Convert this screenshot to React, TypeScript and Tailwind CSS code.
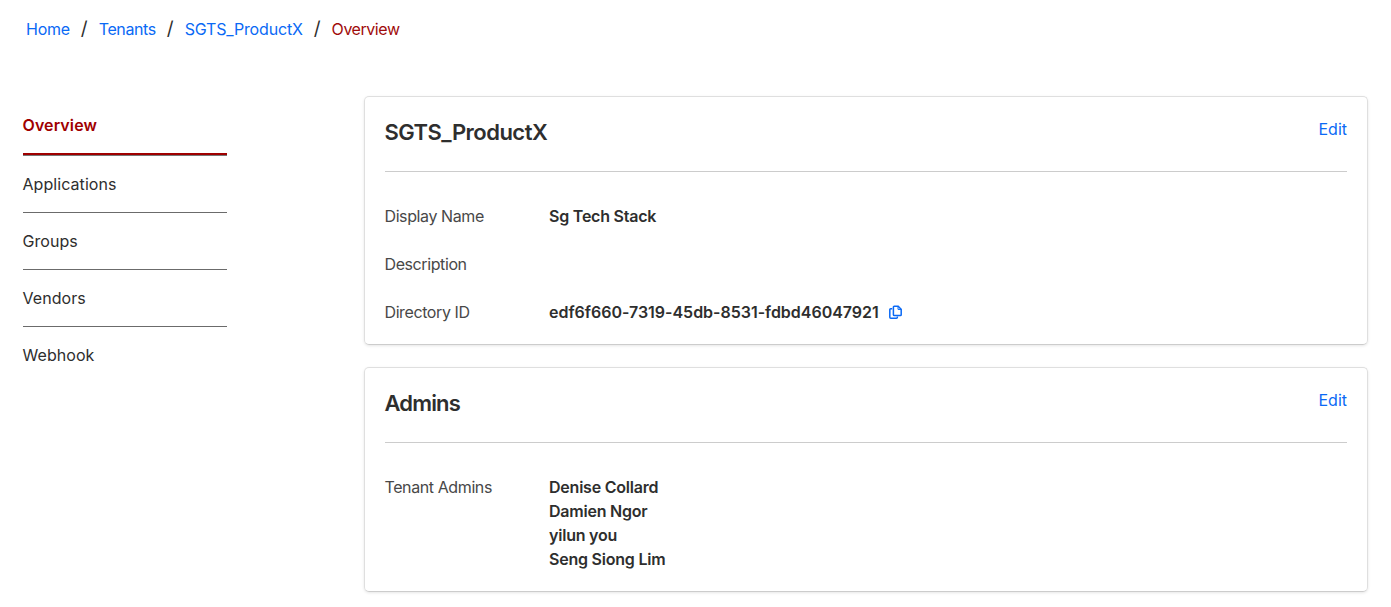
import type { ReactNode } from "react";

const crumbs = [
  { label: "Home", spacing: "tracking-[-0.25px]" },
  { label: "Tenants", spacing: "tracking-[-0.4px]" },
  { label: "SGTS_ProductX", spacing: "tracking-[-0.17px]" },
];
const links = ["Applications", "Groups", "Vendors", "Webhook"];

function Breadcrumbs() {
  return (
    <nav className="flex h-6 items-center pl-[26px] text-base leading-6">
      {crumbs.map((c) => (
        <span key={c.label} className="flex h-6">
          <a className={`text-[#0a69f5] ${c.spacing}`}>{c.label}</a>
          <span className="w-[28.9px] text-center text-[19px] leading-6">/</span>
        </span>
      ))}
      <span className="h-6 tracking-[-0.45px] text-[#9f0b0b]">Overview</span>
    </nav>
  );
}

function Sidebar() {
  return (
    <aside className="ml-[23px] w-[204px] text-base">
      <div className="flex h-[60px] flex-col border-b border-[#777777]">
        <a className="flex h-[59px] items-center border-b-2 border-[#9f0000] font-semibold tracking-[0.1px] text-[#9f0000]">
          <span className="-ml-[0.5px]">Overview</span>
        </a>
      </div>
      {links.map((l) => (
        <a key={l} className="flex h-[57px] items-center border-b border-[#6b6b6b] last:border-transparent">
          <span className="-ml-[0.5px] tracking-[0.06px]">{l}</span>
        </a>
      ))}
    </aside>
  );
}

function Card({
  title,
  spacing,
  className,
  children,
}: {
  title: string;
  spacing: string;
  className: string;
  children: ReactNode;
}) {
  return (
    <section className={`w-[1004px] rounded-[5px] border border-[#dfdfdf] border-b-[#cccccc] px-5 shadow-[0_1px_3px_rgba(0,0,0,0.1)] ${className}`}>
      <header className="flex h-[75px] justify-between border-b border-[#cccccc]">
        <h2 className={`-ml-[0.5px] pt-5 text-[22px] leading-[30px] font-semibold ${spacing}`}>{title}</h2>
        <a className="pt-5 text-base leading-6 text-[#0a69f5]">Edit</a>
      </header>
      <div className="flex flex-col gap-6 pt-8">{children}</div>
    </section>
  );
}

function Row({ label, children }: { label: string; children?: ReactNode }) {
  return (
    <div className="-ml-[0.5px] flex text-base leading-6">
      <span className="w-[164.5px] tracking-[-0.4px] text-[#484848]">{label}</span>
      <div className="font-semibold tracking-[-0.22px]">{children}</div>
    </div>
  );
}

function CopyIcon() {
  return (
    <svg width="13" height="15" viewBox="0 0 13 15" fill="none" stroke="#0a69f5" strokeWidth="1.5">
      <path d="M5.2 1.2h4l3 3v5.6q0 .8-.8.8H5.2q-.8 0-.8-.8V2q0-.8.8-.8Z" />
      <path d="M9 1.4v3h3" strokeWidth="1" />
      <path d="M3.2 3.8H1.7q-.9 0-.9.9v7.6q0 1 1 1h5.6q1 0 1-1v-.8" />
    </svg>
  );
}

export default function App() {
  return (
    <div className="h-[607px] overflow-hidden bg-white pt-[17px] font-[Inter,sans-serif] text-[#2e2e2e]">
      <Breadcrumbs />
      <div className="flex pt-[55px]">
        <Sidebar />
        <main className="ml-[137px] flex flex-col gap-[22px]">
          <Card title="SGTS_ProductX" spacing="tracking-[-0.52px]" className="h-[249px]">
            <Row label="Display Name">Sg Tech Stack</Row>
            <Row label="Description" />
            <Row label="Directory ID">
              <span className="flex items-center gap-[10px]">
                <span className="tracking-[-0.02px]">edf6f660-7319-45db-8531-fdbd46047921</span>
                <CopyIcon />
              </span>
            </Row>
          </Card>
          <Card title="Admins" spacing="tracking-[-0.85px]" className="h-[225px]">
            <Row label="Tenant Admins">
              <div>Denise Collard</div>
              <div>Damien Ngor</div>
              <div>yilun you</div>
              <div>Seng Siong Lim</div>
            </Row>
          </Card>
        </main>
      </div>
    </div>
  );
}
